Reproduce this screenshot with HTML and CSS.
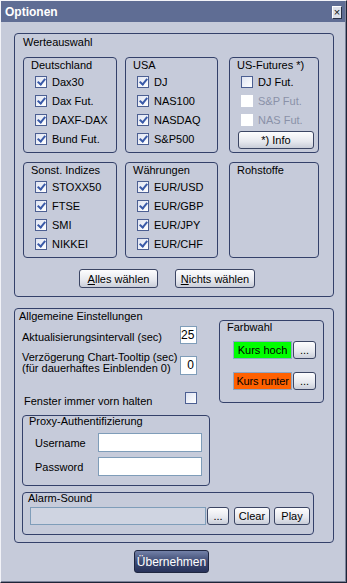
FILE: index.html
```html
<!DOCTYPE html>
<html lang="de">
<head>
  <meta charset="UTF-8" />
  <title>Optionen</title>
  <link rel="stylesheet" href="styles.css">
</head>
<body>
<div class="window">
  <div class="titlebar">
    <span class="title">Optionen</span>
    <span class="close">&times;</span>
  </div>
  <div class="content">

    <!-- Werteauswahl -->
    <div class="group values">
      <div class="group-label">Werteauswahl</div>
      <div class="markets">
        <div class="group sub">
          <div class="sub-label">Deutschland</div>
          <div class="check"><span class="box on"></span>Dax30</div>
          <div class="check"><span class="box on"></span>Dax Fut.</div>
          <div class="check"><span class="box on"></span>DAXF-DAX</div>
          <div class="check"><span class="box on"></span>Bund Fut.</div>
        </div>
        <div class="group sub">
          <div class="sub-label">USA</div>
          <div class="check"><span class="box on"></span>DJ</div>
          <div class="check"><span class="box on"></span>NAS100</div>
          <div class="check"><span class="box on"></span>NASDAQ</div>
          <div class="check"><span class="box on"></span>S&amp;P500</div>
        </div>
        <div class="group sub third">
          <div class="sub-label">US-Futures *)</div>
          <div class="check"><span class="box"></span>DJ Fut.</div>
          <div class="check disabled"><span class="box"></span>S&amp;P Fut.</div>
          <div class="check disabled"><span class="box"></span>NAS Fut.</div>
          <button class="btn info">*) Info</button>
        </div>
        <div class="group sub">
          <div class="sub-label">Sonst. Indizes</div>
          <div class="check"><span class="box on"></span>STOXX50</div>
          <div class="check"><span class="box on"></span>FTSE</div>
          <div class="check"><span class="box on"></span>SMI</div>
          <div class="check"><span class="box on"></span>NIKKEI</div>
        </div>
        <div class="group sub">
          <div class="sub-label">Währungen</div>
          <div class="check"><span class="box on"></span>EUR/USD</div>
          <div class="check"><span class="box on"></span>EUR/GBP</div>
          <div class="check"><span class="box on"></span>EUR/JPY</div>
          <div class="check"><span class="box on"></span>EUR/CHF</div>
        </div>
        <div class="group sub third">
          <div class="sub-label">Rohstoffe</div>
        </div>
      </div>
      <div class="select-buttons">
        <button class="btn all"><u>A</u>lles wählen</button>
        <button class="btn none"><u>N</u>ichts wählen</button>
      </div>
    </div>

    <!-- Allgemeine Einstellungen -->
    <div class="group general">
      <div class="general-top">
        <div class="settings">
          <div class="group-label">Allgemeine Einstellungen</div>
          <div class="setting first">
            <span class="setting-text">Aktualisierungsintervall (sec)</span>
            <span class="field num">25</span>
          </div>
          <div class="setting second">
            <span class="setting-text two-line">Verzögerung Chart-Tooltip (sec)<br>(für dauerhaftes Einblenden 0)</span>
            <span class="field num">0</span>
          </div>
          <div class="setting third-row">
            <span class="setting-text pinned">Fenster immer vorn halten</span>
            <span class="box"></span>
          </div>
        </div>
        <div class="group colors">
          <div class="colors-label">Farbwahl</div>
          <div class="color-row">
            <span class="swatch up">Kurs hoch</span>
            <button class="btn dots">...</button>
          </div>
          <div class="color-row down-row">
            <span class="swatch down">Kurs runter</span>
            <button class="btn dots">...</button>
          </div>
        </div>
      </div>

      <div class="group proxy">
        <div class="small-label">Proxy-Authentifizierung</div>
        <div class="login-row">
          <span class="login-text">Username</span>
          <span class="field login"></span>
        </div>
        <div class="login-row pw">
          <span class="login-text">Password</span>
          <span class="field login"></span>
        </div>
      </div>

      <div class="group alarm">
        <div class="small-label">Alarm-Sound</div>
        <div class="alarm-row">
          <span class="field sound"></span>
          <button class="btn dots">...</button>
          <button class="btn small clear">Clear</button>
          <button class="btn small">Play</button>
        </div>
      </div>
    </div>

    <div class="footer">
      <button class="apply">Übernehmen</button>
    </div>
  </div>
</div>
</body>
</html>
```

FILE: styles.css
```css
* {
  box-sizing: border-box;
}
body {
  margin: 0;
  font-family: "Liberation Sans", Arial, sans-serif;
  font-size: 11px;
  color: #000;
  background: #c6cbda;
}
.window {
  width: 347px;
  height: 583px;
  background: #c6cbda;
  border: 1px solid;
  border-color: #f2f3f8 #1e2438 #1e2438 #f2f3f8;
  box-shadow: inset -1px -1px 0 #7c839a;
}
.titlebar {
  height: 21px;
  margin-right: 1px;
  background: #5f6d94;
  display: flex;
  align-items: center;
  justify-content: space-between;
  padding: 0 3px 0 4px;
}
.title {
  color: #fff;
  font-weight: bold;
  font-size: 12px;
}
.close {
  width: 10px;
  height: 13px;
  margin-top: 2px;
  background: #dde1ea;
  border: 1px solid;
  border-color: #fff #2a3147 #2a3147 #fff;
  font-size: 11px;
  line-height: 10px;
  text-align: center;
  color: #111;
}
.content {
  padding: 11px 0 0 13px;
}

/* group boxes */
.group {
  border: 1px solid #34416a;
  border-radius: 4px;
}
.group-label {
  line-height: 14px;
}
.values {
  width: 320px;
  height: 264px;
  padding: 1px 0 0 8px;
}
.markets {
  margin-top: 8px;
  display: grid;
  grid-template-columns: 94px 93px 93px;
  grid-auto-rows: 96px;
  column-gap: 8px;
  row-gap: 9px;
}
.sub.third {
  margin-left: 3px;
}
.sub-label {
  line-height: 14px;
  padding-left: 7px;
}
.check {
  height: 19px;
  display: flex;
  align-items: center;
  padding-left: 11px;
}
.check.disabled {
  color: #8a91a8;
}
.box {
  width: 12px;
  height: 12px;
  margin-right: 5px;
  border: 1px solid #4c5f92;
  background: linear-gradient(135deg, #dfe4f2, #ffffff);
  position: relative;
  flex-shrink: 0;
}
.box.on::after {
  content: "";
  position: absolute;
  left: 3px;
  top: 0px;
  width: 3px;
  height: 6px;
  border: solid #3a5aa8;
  border-width: 0 2px 2px 0;
  transform: rotate(40deg);
}
.check.disabled .box {
  border-color: #fff;
  background: #fff;
}

/* buttons */
.btn {
  font-family: inherit;
  font-size: 11px;
  color: #000;
  border: 1px solid #3b4563;
  border-radius: 3px;
  background: linear-gradient(#fdfdfe, #e6e8ee 60%, #c9cdd8);
  padding: 0;
  cursor: pointer;
  white-space: nowrap;
}
.info {
  margin: 2px 0 0 8px;
  width: 76px;
  height: 18px;
}
.select-buttons {
  margin-top: 11px;
  display: flex;
  gap: 17px;
  padding-left: 56px;
}
.all {
  width: 79px;
  height: 19px;
}
.none {
  width: 80px;
  height: 19px;
}

/* general settings */
.general {
  margin-top: 11px;
  width: 320px;
  height: 235px;
  padding: 0 0 0 4px;
}
.general-top {
  display: flex;
  height: 106px;
}
.settings {
  width: 178px;
}
.setting {
  display: flex;
  justify-content: space-between;
  align-items: center;
  padding-left: 3px;
}
.setting.first {
  margin-top: 3px;
  height: 18px;
}
.setting-text {
  padding-top: 3px;
}
.setting.second {
  margin-top: 8px;
  height: 23px;
  align-items: flex-end;
}
.two-line {
  line-height: 11px;
  align-self: flex-start;
  padding-top: 0;
}
.setting.third-row {
  margin-top: 17px;
  align-items: flex-start;
  padding-left: 5px;
}
.pinned {
  padding-top: 3px;
}
.setting .box {
  margin-right: 0;
}
.field {
  background: #fff;
  border: 1px solid #7f9db9;
}
.num {
  width: 17px;
  height: 18px;
  text-align: right;
  padding-right: 2px;
  font-size: 12px;
  line-height: 16px;
}
.second .num {
  height: 19px;
}

/* Farbwahl */
.colors {
  margin: 11px 0 0 22px;
  width: 105px;
  height: 83px;
  padding-left: 13px;
}
.colors-label {
  line-height: 13px;
  margin-left: -6px;
}
.color-row {
  margin-top: 7px;
  display: flex;
  gap: 1px;
  height: 18px;
}
.color-row.down-row {
  margin-top: 13px;
}
.swatch {
  width: 59px;
  border: 1px solid #8ea7c4;
  text-align: center;
  line-height: 16px;
  white-space: nowrap;
  overflow: hidden;
}
.swatch.up {
  background: #00ff00;
}
.swatch.down {
  background: #ff6100;
  letter-spacing: -0.2px;
}
.dots {
  width: 23px;
  height: 18px;
}

/* proxy + alarm */
.proxy {
  margin-left: 3px;
  width: 188px;
  height: 71px;
  padding-left: 6px;
}
.small-label {
  line-height: 11px;
}
.login-row {
  margin-top: 6px;
  display: flex;
  align-items: center;
  height: 19px;
  padding-left: 6px;
}
.login-row.pw {
  margin-top: 5px;
}
.login-text {
  width: 63px;
}
.login {
  width: 104px;
  height: 19px;
}
.alarm {
  margin: 6px 0 0 3px;
  width: 292px;
  height: 43px;
  padding-left: 5px;
}
.alarm .small-label {
  line-height: 10px;
}
.alarm-row {
  margin-top: 4px;
  padding-left: 2px;
  display: flex;
  height: 18px;
}
.sound {
  width: 176px;
  height: 18px;
  background: #cfd4e1;
}
.alarm-row .dots {
  width: 22px;
  margin-left: 1px;
}
.small {
  width: 36px;
  height: 18px;
  margin-left: 4px;
}
.clear {
  margin-left: 5px;
}

/* footer */
.footer {
  margin-top: 7px;
  padding-left: 120px;
}
.apply {
  width: 75px;
  height: 23px;
  font-family: inherit;
  font-size: 12px;
  color: #fff;
  border: 1px solid #1e2640;
  border-radius: 3px;
  background: linear-gradient(#7381a8, #3e4b73 50%, #27325a);
  padding: 0;
}
```
